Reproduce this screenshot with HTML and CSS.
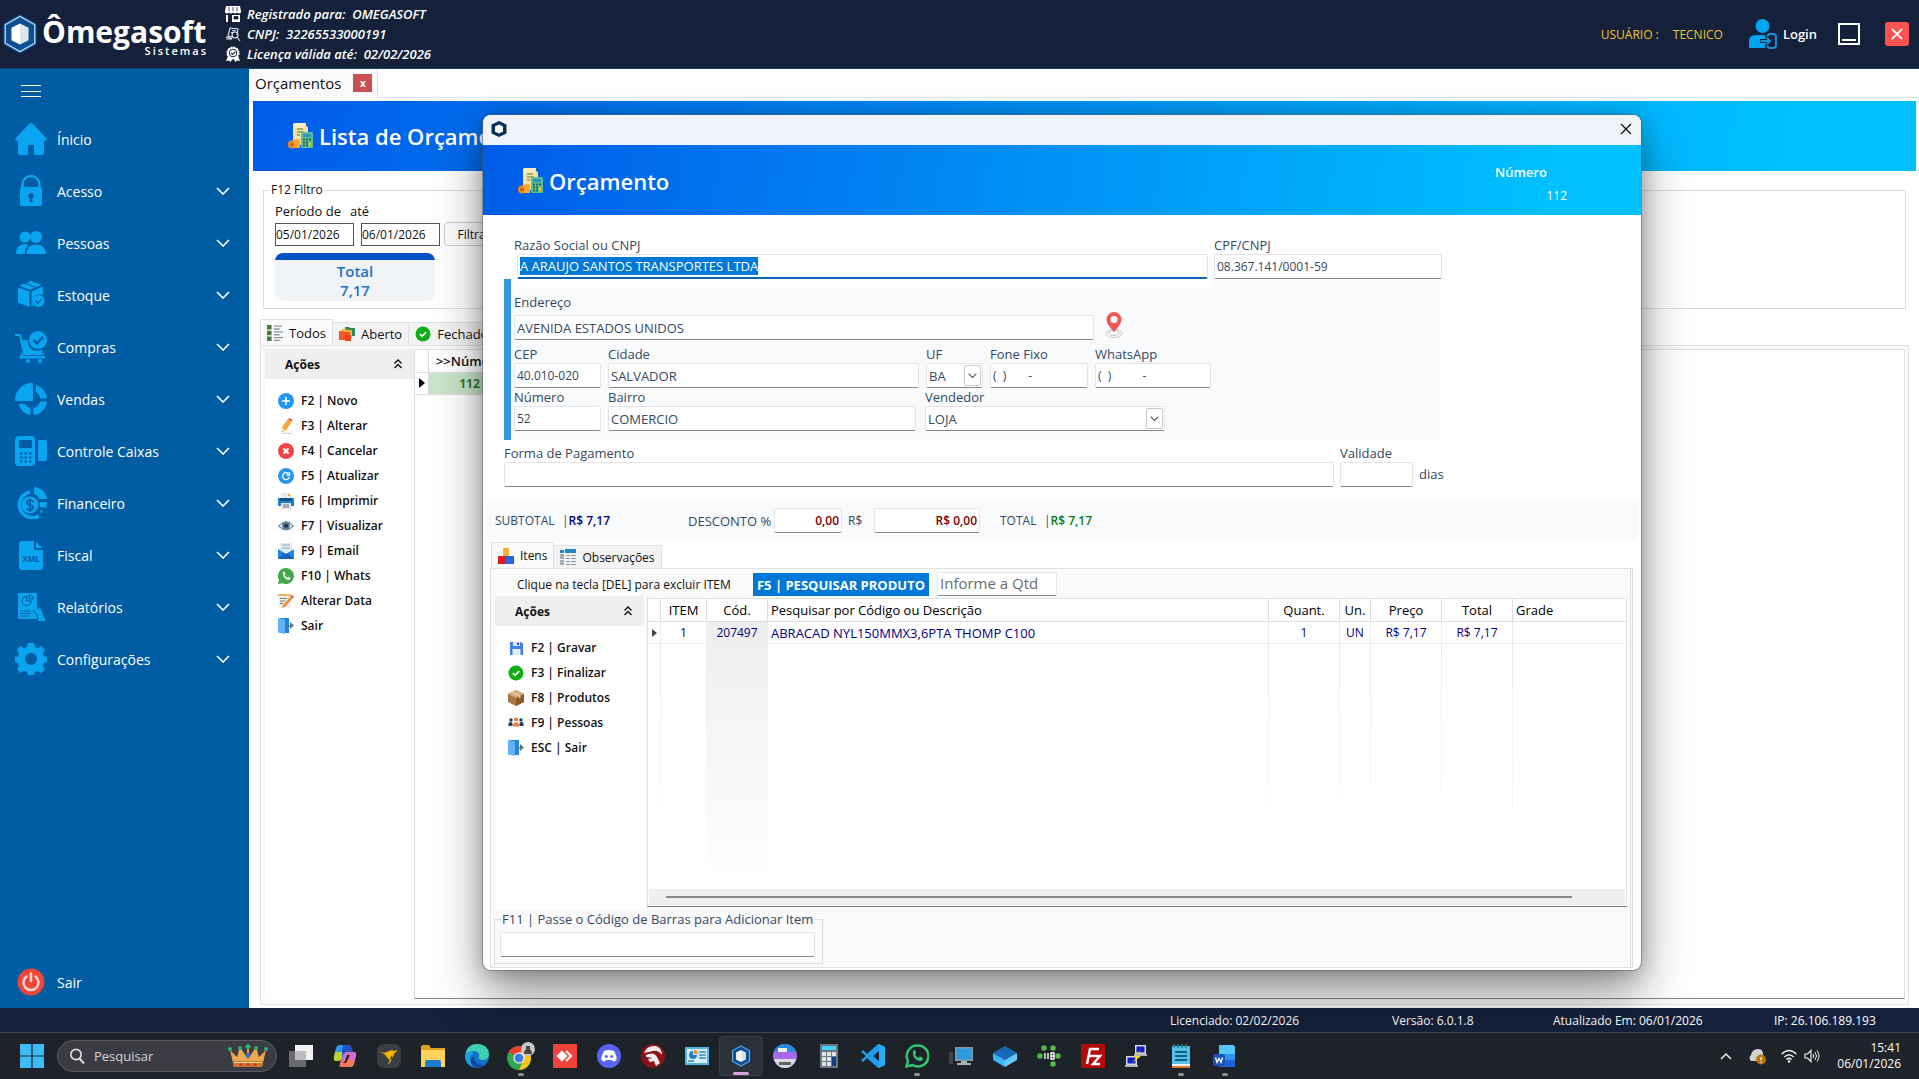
FILE: index.html
```html
<!DOCTYPE html>
<html lang="pt-BR">
<head>
<meta charset="utf-8">
<meta name="viewport" content="width=device-width, initial-scale=1">
<title>Ômegasoft Sistemas</title>
<link rel="stylesheet" href="styles.css">
</head>
<body>
<svg class="defs" aria-hidden="true">
  <symbol id="chev" viewBox="0 0 14 8"><path d="M1 1l6 6 6-6" fill="none" stroke="currentColor" stroke-width="1.6"/></symbol>
  <symbol id="collapse" viewBox="0 0 10 10"><path d="M1.500 4.500L5 1l3.500 3.500M1.500 9L5 5.500 8.500 9" fill="none" stroke="currentColor" stroke-width="1.400"/></symbol>
  <symbol id="hex" viewBox="0 0 40 44"><path d="M20 1l18 10v22L20 43 2 33V11z" fill="#0b3b73"/><path d="M20 3.500l15.500 8.700v19.600L20 40.500 4.500 31.800V12.200z" fill="#0c4f93" stroke="#a9d2f2" stroke-width="1.500"/><path d="M20 11l9 4.500v13L20 33z" fill="#dfe5ec"/><path d="M20 11l-9 4.500v13L20 33z" fill="#fff"/></symbol>
  <symbol id="budget" viewBox="0 0 26 26"><path d="M5 2q0-2 2-2h11v3q2 0 2 3v16H5z" fill="#f7dfa5"/><path d="M5 6V2q0-2 2-2h10l1 4z" fill="#fbe9c0"/><path d="M9 6h6M9 9h7M9 12h3" stroke="#7aa35b" stroke-width="1.300"/><rect x="13" y="9" width="12" height="16" rx="1.500" fill="#5fc08f"/><rect x="15" y="11" width="8" height="3" fill="#2d8fd0"/><path d="M15 16.500h2M18 16.500h2M21 16.500h2M15 19.500h2M18 19.500h2M15 22.500h2M18 22.500h2" stroke="#1c6e52" stroke-width="1.800"/><path d="M21 19h2v4.500h-2z" fill="#f0b429"/><circle cx="4" cy="21.500" r="4" fill="#f08a1d"/><path d="M6 17q3-2 6 0v8H6z" fill="#f7a62f"/><circle cx="4" cy="21.500" r="1.800" fill="#c9630f"/></symbol>
  <symbol id="check" viewBox="0 0 16 16"><circle cx="8" cy="8" r="7.500" fill="#0db014"/><path d="M4.800 8.200l2.300 2.200 4-4.300" fill="none" stroke="#fff" stroke-width="1.600"/></symbol>
  <symbol id="door" viewBox="0 0 16 16"><path d="M2 0h9v15H2z" fill="#1f86e0"/><path d="M0 0l7 1.500V16L0 14.500z" fill="#5fb2f7"/><path d="M8 7h4V4l4 3.500-4 3.500V8.500H8z" fill="#5b7685"/></symbol>
</svg>

<div class="app">
  <header class="topbar">
    <div class="logo">
      <svg class="logo-mark" aria-hidden="true"><use href="#hex"/></svg>
      <div class="logo-text"><span class="logo-name">Ômegasoft</span><span class="logo-sub">Sistemas</span></div>
    </div>
    <ul class="license">
      <li><svg viewBox="0 0 16 16"><path d="M1 0h14l1 5H0z" fill="#fff"/><path d="M0 5h16v1.500q-2 2-4 0-2 2-4 0-2 2-4 0-2 2-4 0zM1 9h2v7H1zM7 9h8v7H7z" fill="#fff"/><path d="M9 10.500h4v2.500H9zM4 1v4M8 1v4M12 1v4" stroke="#15213a" fill="#15213a" stroke-width=".8"/></svg>Registrado para:&nbsp; OMEGASOFT</li>
      <li><svg viewBox="0 0 16 16" fill="none" stroke="#e3e7ee" stroke-width="1.100"><path d="M5 2l8 1-1 6M5 2L3 10l4 1M1 11l6 1.500M1 13h6M7 4.500l4 .5M6 6.500h3"/><circle cx="10" cy="9" r="3"/><path d="M12 11l3 4"/></svg>CNPJ:&nbsp; 32265533000191</li>
      <li><svg viewBox="0 0 16 16"><path d="M3 10l-2 5 3-.5L5.500 16 8 12l2.500 4 1.500-1.500 3 .5-2-5z" fill="#fff"/><circle cx="8" cy="7" r="5.800" fill="#fff" stroke="#fff" stroke-width="1.600" stroke-dasharray="2 1"/><circle cx="8" cy="7" r="3.800" fill="none" stroke="#15213a"/><path d="M6 7l1.500 1.500L10.200 5.800" fill="none" stroke="#15213a" stroke-width="1.200"/></svg>Licença válida até:&nbsp; 02/02/2026</li>
    </ul>
    <div class="user">
      <span class="user-label">USUÁRIO :</span>
      <span class="user-name">TECNICO</span>
      <button class="login" type="button"><svg viewBox="0 0 28 30"><circle cx="13.500" cy="7" r="7" fill="#00a5f0"/><path d="M0 22q0-6 7-6h10v13H1q-1 0-1-1z" fill="#00a5f0"/><path d="M11 22h10m-3.500-3.500L21 22l-3.500 3.500M18 18v-1q0-2 2-2h4.500q2.500 0 2.500 2.500v9q0 2.500-2.500 2.500H20q-2 0-2-2v-1" fill="none" stroke="#15213a" stroke-width="4"/><path d="M11.500 22H21m-3-3l3 3-3 3M18.500 17.500q0-2.500 2.500-2.500h3q3 0 3 3v8q0 3-3 3h-3q-2.500 0-2.500-2.500" fill="none" stroke="#1c8fd6" stroke-width="2"/></svg>Login</button>
      <button class="win-min" type="button" aria-label="Minimizar"></button>
      <button class="win-close" type="button" aria-label="Fechar"><svg viewBox="0 0 12 12"><path d="M.8.800l10.400 10.400M11.200.800L.8 11.200" stroke="#fff" stroke-width="1.700"/></svg></button>
    </div>
  </header>

  <div class="workspace">
    <nav class="sidebar" aria-label="Menu">
      <button class="burger" type="button" aria-label="Menu"><span></span><span></span><span></span></button>
      <a class="nav" href="#"><svg viewBox="0 0 32 32"><path d="M16 0q1 0 2 1l14 15q0 1.500-1.500 1.500H29V30q0 2-2 2h-8V23q0-1-1-1h-4q-1 0-1 1v9H5q-2 0-2-2V17.500H1.500Q0 17.500 0 16L14 1q1-1 2-1z"/></svg><span>Ínicio</span></a>
      <a class="nav" href="#"><svg viewBox="0 0 32 32"><path d="M7.500 13V9.500a8.500 8.500 0 0 1 17 0V13" fill="none" stroke="#0aa5f0" stroke-width="2.400"/><rect x="5" y="12" width="22" height="19" rx="2"/><path d="M16 18a3 3 0 0 1 1.500 5.500V27h-3v-3.500A3 3 0 0 1 16 18z" fill="#005ca3"/></svg><span>Acesso</span><svg class="chev"><use href="#chev"/></svg></a>
      <a class="nav" href="#"><svg viewBox="0 0 32 32"><circle cx="10" cy="10" r="5.500"/><path d="M1 27q0-10 9-10 2 0 3.500.8Q9.500 21 10 27z"/><circle cx="21" cy="10" r="6"/><path d="M11.500 27q0-9.500 9.500-9.500T31 27z"/></svg><span>Pessoas</span><svg class="chev"><use href="#chev"/></svg></a>
      <a class="nav" href="#"><svg viewBox="0 0 32 32"><path d="M3 8.500l11.500 4V28L4 24q-1-.5-1-1.500zM4 6.500l5-2 11 4-4.500 2.500zM11 4l5-2 10.500 4-5 2zM16.500 12.500L28 7.500V16q-9-2-10.500 6 0 3 1 4.500l-2 1z"/><circle cx="23.500" cy="22" r="6"/><path d="M20.500 22l2.300 2.200 4-4.200" fill="none" stroke="#005ca3" stroke-width="1.600"/></svg><span>Estoque</span><svg class="chev"><use href="#chev"/></svg></a>
      <a class="nav" href="#"><svg viewBox="0 0 32 32"><path d="M0 4h5l4 19h20M6 28q-1.500-4 3-5" fill="none" stroke="#0aa5f0" stroke-width="2"/><path d="M7 9h6q-1 7 5 10 6 2 10-1l-1.500 4H9z"/><circle cx="23" cy="9" r="9"/><path d="M18.500 9l3.500 3.500 6-6.500" fill="none" stroke="#005ca3" stroke-width="2.500"/><path d="M6 25h24v2.500H6z"/><circle cx="13" cy="30" r="2"/><circle cx="25" cy="30" r="2"/></svg><span>Compras</span><svg class="chev"><use href="#chev"/></svg></a>
      <a class="nav" href="#"><svg viewBox="0 0 32 32"><path d="M18 0v18H0A17 17 0 0 1 18 0z"/><path d="M21 2a15 15 0 0 1 11 13.500h-7Q25 11 21 9zM32 18.500A15 15 0 0 1 18.500 32v-7q5-1 6.500-6.500zM3.500 21H10q1.500 3 5.500 4v7Q6.500 30.500 3.500 21z"/></svg><span>Vendas</span><svg class="chev"><use href="#chev"/></svg></a>
      <a class="nav" href="#"><svg viewBox="0 0 32 32"><path d="M4 1h12q4 0 4 4v22q0 4-4 4H4q-4 0-4-4V5q0-4 4-4zm0 4v8h13V5z" fill-rule="evenodd"/><path d="M23 5h7q2 0 2 2v17q0 2-2 2h-7z"/><path d="M5 18.500h2.500m2 0H12m2 0h2.500M5 22.500h2.500m2 0H12m2 0h2.500M5 26.500h2.500m2 0H12m2 0h2.500" stroke="#005ca3" stroke-width="2.200"/></svg><span>Controle Caixas</span><svg class="chev"><use href="#chev"/></svg></a>
      <a class="nav" href="#"><svg viewBox="0 0 32 32"><path d="M15 5A13 13 0 1 0 24 29" fill="none" stroke="#0aa5f0" stroke-width="3.600"/><circle cx="15" cy="18" r="8.500"/><path d="M19 0q11 1 13 12h-8q-1-4-5-5zM25 15h7l-1 6q-4-1-6-1zM25 23l3 1-2 3z"/><path d="M18 15q-.5-2-3-2t-3 2.300 3 2.700 3 2.700-3 2.300-3-2M15 11.500v13" fill="none" stroke="#005ca3" stroke-width="1.700"/></svg><span>Financeiro</span><svg class="chev"><use href="#chev"/></svg></a>
      <a class="nav" href="#"><svg viewBox="0 0 32 32"><path d="M7 2h12v7q0 2 2 2h7v17q0 3-3 3H7q-3 0-3-3V5q0-3 3-3z"/><path d="M21 3l6 6h-5q-1 0-1-1z"/><text x="16" y="22.500" text-anchor="middle" class="xml">XML</text></svg><span>Fiscal</span><svg class="chev"><use href="#chev"/></svg></a>
      <a class="nav" href="#"><svg viewBox="0 0 32 32"><path d="M3 2h19v14l2 3v-3q2 1 3 5l2 5v2H14H3z"/><path d="M23 27h7v3h-7z"/><path d="M11.500 5.500a4.500 4.500 0 1 0 4.500 4.500h-4.500zM14 4v4h4q-.5-4-4-4zM5 20h11M5 22.500h11M5 25h9M18 19l4 5 1 4" fill="none" stroke="#005ca3" stroke-width="1.100"/></svg><span>Relatórios</span><svg class="chev"><use href="#chev"/></svg></a>
      <a class="nav" href="#"><svg viewBox="0 0 32 32"><path d="M13 0h6l1 4 3 1.200L26.500 3l3.500 4-2 4 1.200 2.500H32v5.500l-3.200 1L28 23l2 3.500-4 3.500-3-2-3.500 1.300L19 32h-6l-1-3-3-1.300L5.500 30 2 26l2-3-1.200-3L0 19v-5.500h3L4 11 2 7l3.500-4L9 5.200 12 4zM16 10a6 6 0 1 0 .01 0z" fill-rule="evenodd"/></svg><span>Configurações</span><svg class="chev"><use href="#chev"/></svg></a>
      <a class="nav nav-exit" href="#"><svg viewBox="0 0 32 32"><circle cx="16" cy="16" r="13.500" fill="#ef4637"/><path d="M11.500 10.500a7.500 7.500 0 1 0 9 0M16 7.500V15" fill="none" stroke="#fbd5d2" stroke-width="2.500" stroke-linecap="round"/></svg><span>Sair</span></a>
    </nav>

    <main class="main">
      <div class="doc-tabs"><div class="doc-tab"><span>Orçamentos</span><button type="button" aria-label="Fechar aba">x</button></div></div>
      <div class="page">
        <h1 class="banner"><svg><use href="#budget"/></svg>Lista de Orçamentos</h1>
        <fieldset class="filter">
          <legend>F12 Filtro</legend>
          <div class="filter-labels"><label for="de">Período de</label><label for="ate">até</label></div>
          <div class="filter-row"><input id="de" type="text" value="05/01/2026"><input id="ate" type="text" value="06/01/2026"><button type="button">Filtrar</button></div>
          <div class="total-card"><span>Total</span><strong>7,17</strong></div>
        </fieldset>
        <div class="tabs list-tabs">
          <button class="tab active" type="button"><svg viewBox="0 0 14 14"><path d="M0 0h4v4H0zM0 5h4v4H0zM0 10h4v4H0z" fill="#4c7a3c"/><path d="M6 1h7M6 3.500h5M6 6h8M6 8.500h5M6 11h8M6 13.500h5" stroke="#8a94a0" stroke-width="1.200"/></svg>Todos</button>
          <button class="tab" type="button"><svg viewBox="0 0 16 14"><path d="M6 0h4l1 1h5v8H6z" fill="#2c8c5c"/><path d="M3 2h4l1 1h5v8H3z" fill="#f3b13c"/><path d="M0 4h4l1 1h6v8H0z" fill="#f4572e"/><path d="M6 8h6v6H6z" fill="#f0431c"/></svg>Aberto</button>
          <button class="tab" type="button"><svg><use href="#check"/></svg>Fechado</button>
        </div>
        <div class="list-panel">
          <aside class="actions">
            <h2>Ações<svg><use href="#collapse"/></svg></h2>
            <ul>
              <li><button type="button"><svg viewBox="0 0 16 16"><circle cx="8" cy="8" r="8" fill="#2196f3"/><path d="M8 4v8M4 8h8" stroke="#fff" stroke-width="1.500"/></svg>F2 | Novo</button></li>
              <li><button type="button"><svg viewBox="0 0 16 16"><path d="M4 9l6-8 4 2.500-6 9-4 1.500z" fill="#f6a93b"/><path d="M10 1l1.500-1L14.500 2 14 3.500z" fill="#d9534f"/><path d="M4 9l-1.500 5L7 12z" fill="#f5dfb5"/><path d="M4 15.300h10" stroke="#c9c9c9"/></svg>F3 | Alterar</button></li>
              <li><button type="button"><svg viewBox="0 0 16 16"><circle cx="8" cy="8" r="8" fill="#f0464a"/><path d="M5.500 5.500l5 5M10.500 5.500l-5 5" stroke="#fff" stroke-width="2"/></svg>F4 | Cancelar</button></li>
              <li><button type="button"><svg viewBox="0 0 16 16"><circle cx="8" cy="8" r="8" fill="#2b95f0"/><path d="M10.500 5.500a3.500 3.500 0 1 0 1 3.500M11.500 4v3h-3" fill="none" stroke="#fff" stroke-width="1.300"/></svg>F5 | Atualizar</button></li>
              <li><button type="button"><svg viewBox="0 0 16 16"><path d="M3 0h7l3 3v4H3z" fill="#e9eef2"/><path d="M10 0l3 3h-3z" fill="#f6a93b"/><path d="M0 5h16v8H0z" fill="#1f7fd1"/><path d="M2 5h12v3H2z" fill="#14518c"/><path d="M3 10h10v6H3z" fill="#dfe3e6"/><path d="M5 12h6M5 14h6" stroke="#777"/></svg>F6 | Imprimir</button></li>
              <li><button type="button"><svg viewBox="0 0 16 16"><path d="M.5 8Q8-.5 15.500 8 8 16 .5 8z" fill="#e4e9ec" stroke="#5a6872"/><circle cx="8" cy="7.800" r="4" fill="#5b84a3"/><circle cx="8" cy="7.800" r="2" fill="#1e2d38"/></svg>F7 | Visualizar</button></li>
              <li><button type="button"><svg viewBox="0 0 16 16"><path d="M2 0h12v11H2z" fill="#e3edf3"/><path d="M4 2h8M4 5h8" stroke="#94a5b0"/><path d="M0 6l8 5 8-5v10H0z" fill="#1e88e5"/><path d="M0 16l6-6 2 1 2-1 6 6z" fill="#1565c0"/></svg>F9 | Email</button></li>
              <li><button type="button"><svg viewBox="0 0 16 16"><path d="M8 0a8 8 0 1 1-3.500 15.200L0 16l1-4A8 8 0 0 1 8 0z" fill="#43a84a"/><path d="M5 4l1.500-.5 1 2.500-1 1q1 2 2.800 2.700l1-1 2.200 1.300q0 2-2 2Q4.500 10.500 5 4z" fill="#fff"/></svg>F10 | Whats</button></li>
              <li><button type="button"><svg viewBox="0 0 16 16"><path d="M0 1h13v14H1z" fill="#eceff1"/><path d="M0 1h13v2H0z" fill="#f2b26b"/><path d="M2 5.500h7M2 8h5M2 10.500h3" stroke="#777"/><path d="M5 12L13 3l2 2-8 9-3 .5z" fill="#f28a2e"/><path d="M13 3l1-1 2 2-1 1z" fill="#c2364f"/></svg>Alterar Data</button></li>
              <li><button type="button"><svg><use href="#door"/></svg>Sair</button></li>
            </ul>
          </aside>
          <div class="list-grid">
            <table class="list-table">
              <thead><tr><th class="ind"></th><th>&gt;&gt;Número</th></tr></thead>
              <tbody><tr><td class="ind"><i class="mark"></i></td><td>112</td></tr></tbody>
            </table>
          </div>
        </div>
      </div>
    </main>
  </div>

  <footer class="status"><span>Licenciado: 02/02/2026</span><span>Versão: 6.0.1.8</span><span>Atualizado Em: 06/01/2026</span><span>IP: 26.106.189.193</span></footer>

  <div class="taskbar">
    <button class="task start" type="button" aria-label="Iniciar"><svg viewBox="0 0 24 24"><path d="M0 0h11.400v11.400H0zM12.600 0H24v11.400H12.600zM0 12.600h11.400V24H0zM12.600 12.600H24V24H12.600z" fill="#3fbcf8"/></svg></button>
    <label class="search"><svg class="mag" viewBox="0 0 16 16"><circle cx="7" cy="6.500" r="5.200" fill="none" stroke="#ddd" stroke-width="1.700"/><path d="M10.500 10.500l4.500 5" stroke="#ddd" stroke-width="1.900"/></svg><input type="text" placeholder="Pesquisar" aria-label="Pesquisar"><svg class="crown" viewBox="0 0 40 24"><path d="M2 6l7 7 3-10 6 9 2-10 2 10 6-9 3 10 7-7-4 17H6z" fill="#e9a84e"/><path d="M5 17h30l-1 6H6z" fill="#c97a2e"/><path d="M6 18.500h28" stroke="#fbe0a0"/><g fill="#2fae74"><circle cx="2" cy="5" r="2"/><circle cx="38" cy="5" r="2"/><circle cx="12" cy="4" r="2"/><circle cx="28" cy="4" r="2"/><circle cx="20" cy="2.500" r="2.500"/></g><path d="M20 8l2.500 3.500L20 15l-2.500-3.500z" fill="#2c6cd6"/><g fill="#d1342f"><circle cx="13" cy="20.500" r="1.500"/><circle cx="20" cy="20.500" r="1.500"/><circle cx="27" cy="20.500" r="1.500"/></g></svg></label>
    <div class="apps">
      <button class="task" type="button" aria-label="Visão de tarefas"><svg viewBox="0 0 24 24"><path d="M0 7h17v16H0z" fill="#6a6a6e"/><path d="M6 1h18v15H6z" fill="#f2f2f2"/><path d="M6 7h11v9H6z" fill="#bdbdbf"/></svg></button>
      <button class="task" type="button" aria-label="Copilot"><svg viewBox="0 0 24 24"><path d="M7 1h9q2 0 1 3l-3 9q-1 3-4 3H3q-3 0-2-4l2-8q1-3 4-3z" fill="#2f9be8"/><path d="M2 8h9l-2 6q-1 3-4 3H3q-3 0-2-4z" fill="#b8d531"/><path d="M17 23H8q-2 0-1-3l3-9q1-3 4-3h7q3 0 2 4l-2 8q-1 3-4 3z" fill="#d86bd0"/><path d="M8 16h14l-1 4q-1 3-4 3H8q-2 0-1-3z" fill="#f6785a"/><path d="M10 1h6q2 0 3 4l1 3h-6q-3 0-4 3l-1 4V6z" fill="#2450c8"/><path d="M14 11l-2 6q-1 2-3 2h4l4-8z" fill="#1e222b"/></svg></button>
      <button class="task" type="button" aria-label="Kangaroo"><svg viewBox="0 0 24 24"><rect width="24" height="24" rx="7" fill="#3a3d42"/><path d="M2 7l5 2 4-1.500q4-2 6-.5l3-1-.5 2-2 1-1 3-1 2-.5-2.500-2 2.500 1.500 2.500-3 4-.5-.5 2-3.500-3.500-3.500-1-2z" fill="#f5b400"/></svg></button>
      <button class="task" type="button" aria-label="Explorador"><svg viewBox="0 0 24 24"><path d="M0 3q0-2 2-2h6l2 3h14v19H0z" fill="#e0a21b"/><path d="M0 6h24v17H0z" fill="#ffd35a"/><path d="M4 23v-5q0-2 2-2h12q2 0 2 2v5z" fill="#1a7bd0"/></svg></button>
      <button class="task" type="button" aria-label="Edge"><svg viewBox="0 0 24 24"><circle cx="12" cy="12" r="12" fill="#1273c6"/><path d="M1 8Q4 0 12 0q11 0 12 10 0 6-7 6-4 0-3-3 1-6-5-6Q4 7 1 10z" fill="#3fd0b0"/><path d="M9 8q-8 6 0 15Q0 21 0 12q1-5 9-4z" fill="#1c9ce6"/><path d="M9 13q0 9 12 8-8 6-14 0-4-5 2-8z" fill="#0d4a99"/></svg></button>
      <button class="task on" type="button" aria-label="Chrome"><svg viewBox="0 0 28 28" class="wide"><circle cx="12" cy="16" r="12" fill="#2fa84f"/><path d="M12 16L1.600 10A12 12 0 0 1 22.400 10H12z" fill="#e8402f"/><path d="M12 28a12 12 0 0 0 10.400-18H12l4 9z" fill="#fbc21a"/><circle cx="12" cy="16" r="5.600" fill="#fff"/><circle cx="12" cy="16" r="4.500" fill="#3b7de8"/><circle cx="21" cy="7" r="7" fill="#c7c9cb"/><path d="M17 12q0-5 4-5t4 5zM19 4h4v4h-4z" fill="#4a4444"/></svg></button>
      <button class="task" type="button" aria-label="AnyDesk"><svg viewBox="0 0 24 24"><path d="M0 0h24v24H0z" fill="#f0433a"/><path d="M9 6.500l5.500 5.500L9 17.500 3.500 12z" fill="#fff"/><path d="M13 7l5 5-5 5" fill="none" stroke="#fff" stroke-width="2"/></svg></button>
      <button class="task" type="button" aria-label="Discord"><svg viewBox="0 0 24 24"><circle cx="12" cy="12" r="12" fill="#5865f2"/><path d="M7 7q5-2 10 0 3 5 2.500 9-2 1.500-3.500 1.500l-1-1.500H9l-1 1.500q-1.500 0-3.500-1.500Q4 12 7 7z" fill="#fff"/><circle cx="9.300" cy="12.500" r="1.500" fill="#5865f2"/><circle cx="14.700" cy="12.500" r="1.500" fill="#5865f2"/></svg></button>
      <button class="task" type="button" aria-label="Spartan"><svg viewBox="0 0 24 24"><circle cx="12" cy="12" r="12" fill="#8c1218"/><path d="M3 9q3-8 12-7 6 2 6 9-4-5-9-4-4 1-9 2zM5 11q8-4 11 2l3 6-4 3-2-5-4 1-2-3 5-1-7-1z" fill="#eee"/></svg></button>
      <button class="task" type="button" aria-label="Painel"><svg viewBox="0 0 24 24"><path d="M0 3h24v18H0z" fill="#4db6ea"/><path d="M2 5h20v14H2z" fill="#d7f0fc"/><path d="M8 7a4 4 0 1 0 4 4H8z" fill="#1f7fc9"/><path d="M9 6v4h4q0-4-4-4z" fill="#f0902a"/><path d="M14 8h7M14 11h7M14 14h7M3 17h6" stroke="#3a87b8" stroke-width="1.500"/></svg></button>
      <button class="task current" type="button" aria-label="Ômegasoft"><svg viewBox="0 0 40 44"><use href="#hex"/></svg></button>
      <button class="task" type="button" aria-label="Backup"><svg viewBox="0 0 24 24"><circle cx="12" cy="12" r="12" fill="#a86be8"/><path d="M1 8Q4 0 12 0t11 8z" fill="#2b8ae0"/><path d="M5 4h9v4H5z" fill="#eee"/><path d="M1 15h22q-3 9-11 9T1 15z" fill="#d9dde2"/><path d="M6 18h12v3H6z" fill="#666"/></svg></button>
      <button class="task" type="button" aria-label="Calculadora"><svg viewBox="0 0 24 24"><path d="M3 0h18v24H3z" fill="#6a7885"/><path d="M5 2h14v4H5z" fill="#45d3f5"/><path d="M5 8h4v4H5zM10 8h4v4h-4zM15 8h4v4h-4zM5 13h4v4H5zM10 13h4v4h-4zM5 18h4v4H5zM10 18h4v4h-4z" fill="#dfe4e8"/><path d="M15 13h4v9h-4z" fill="#123f80"/></svg></button>
      <button class="task" type="button" aria-label="VS Code"><svg viewBox="0 0 24 24"><path d="M17 0l7 3v18l-7 3L6 14l-4 4-2-2 5-4-5-4 2-2 4 4zm1 7l-6 5 6 5z" fill="#1f9cf0" fill-rule="evenodd"/><path d="M18 0l6 3v18l-6 3z" fill="#2aa9f5"/></svg></button>
      <button class="task on" type="button" aria-label="WhatsApp"><svg viewBox="0 0 24 24"><path d="M12.500 1.500a10.500 10.500 0 1 1-5 19.500L1.500 22.500 3 17A10.500 10.500 0 0 1 12.500 1.500z" fill="none" stroke="#2ecc71" stroke-width="2.400"/><path d="M8 6.500l2-.5 1.300 3-1.300 1.500q1 2.500 3.500 3.500l1.500-1.500 3 1.500q0 3-3 3Q7 15.500 8 6.500z" fill="#2ecc71"/></svg></button>
      <button class="task" type="button" aria-label="Computador"><svg viewBox="0 0 24 24"><path d="M6 3h18v14H6z" fill="#8a979f"/><path d="M7.500 4.500h15v11h-15z" fill="#2c9ade"/><path d="M8 19h14v2H8zM12 17h6v2h-6z" fill="#aab3b9"/><path d="M0 8h4v12H0z" fill="#3c4449"/></svg></button>
      <button class="task" type="button" aria-label="Sandbox"><svg viewBox="0 0 24 24"><path d="M12 2l12 7-12 7L0 9z" fill="#1769b8"/><path d="M0 9l12 7v7L0 16z" fill="#3fb3f5"/><path d="M24 9l-12 7v7l12-7z" fill="#63c9fa"/></svg></button>
      <button class="task" type="button" aria-label="IIS"><svg viewBox="0 0 24 24"><g fill="#55b848"><circle cx="7" cy="4" r="2.800"/><circle cx="16" cy="4" r="2.800"/><circle cx="3" cy="12" r="2.800"/><circle cx="21" cy="12" r="2.800"/><circle cx="16" cy="20" r="2.800"/></g><path d="M8 9v6M11 9v6M14 9h3v6h-3zM14 12h3" fill="none" stroke="#fff" stroke-width="1.400"/></svg></button>
      <button class="task" type="button" aria-label="FileZilla"><svg viewBox="0 0 24 24"><path d="M0 0h24v24H0z" fill="#b30a0a"/><path d="M6 20L9 5h9M8 12h6M12 12h7l-7 8h7" fill="none" stroke="#fff" stroke-width="2.400"/></svg></button>
      <button class="task" type="button" aria-label="PuTTY"><svg viewBox="0 0 24 24"><path d="M10 1h11v9H10z" fill="#d8d8d8"/><path d="M11.500 2.500h8v6h-8z" fill="#1020c8"/><path d="M1 12h11v9H1z" fill="#d8d8d8"/><path d="M2.500 13.500h8v6h-8z" fill="#1020c8"/><path d="M16 6l-8 7h4l-5 6 9-7h-4z" fill="#f7e400"/><path d="M0 21h13v2H0zM9 10h13v2H9z" fill="#b5b5b5"/></svg></button>
      <button class="task on" type="button" aria-label="Bloco de notas"><svg viewBox="0 0 24 24"><path d="M3 2h18v20H3z" fill="#52c3e6"/><path d="M3 22h18v2H3z" fill="#d97a2b"/><path d="M3 20h18v2H3z" fill="#eef4f6"/><path d="M6 8h12M6 12h12M6 16h12" stroke="#135a80" stroke-width="1.800"/><path d="M5 0v4M9 0v4M13 0v4M17 0v4" stroke="#27809f" stroke-width="1.600"/></svg></button>
      <button class="task on" type="button" aria-label="Word"><svg viewBox="0 0 24 24"><path d="M6 1h13q3 0 3 3v19H6z" fill="#1f62d8"/><path d="M6 1h13q3 0 3 3v6H6z" fill="#55c8f7"/><path d="M6 10h16v6H6z" fill="#2f94ee"/><rect y="10" width="12" height="12" rx="2" fill="#1a4fb8"/><path d="M2.500 13.500L4 18.500l2-4 2 4 1.500-5" fill="none" stroke="#fff" stroke-width="1.300"/></svg></button>
    </div>
    <div class="tray">
      <svg class="t-up" viewBox="0 0 12 8"><path d="M1 7l5-5 5 5" fill="none" stroke="#eee" stroke-width="1.500"/></svg>
      <svg class="t-cloud" viewBox="0 0 18 18"><path d="M2 14q-3-3 0-6 1-6 7-6 5 0 5 5v7z" fill="#d0d2d4"/><circle cx="12" cy="12.500" r="5" fill="#b5740e"/><path d="M12 10v3.200M12 14.500v1.200" stroke="#fff" stroke-width="1.300"/></svg>
      <svg class="t-wifi" viewBox="0 0 16 14"><path d="M.8 5Q8-2 15.200 5M3.300 8Q8 3.500 12.700 8M5.500 10.500q2.500-2.300 5 0" fill="none" stroke="#eee" stroke-width="1.500"/><circle cx="8" cy="12.500" r="1.300" fill="#eee"/></svg>
      <svg class="t-vol" viewBox="0 0 16 14"><path d="M1 5h2.500L7 1.500v11L3.500 9H1z" fill="none" stroke="#eee" stroke-width="1.200"/><path d="M9 5q1.500 2 0 4M11 3q3 4 0 8M13 1.500q4 5.500 0 11" fill="none" stroke="#eee"/></svg>
      <div class="clock"><span>15:41</span><span>06/01/2026</span></div>
    </div>
  </div>

  <section class="dialog" role="dialog" aria-label="Orçamento">
    <div class="dlg-title"><svg class="dlg-mark" viewBox="0 0 16 16"><path d="M8 0l7.500 3.500v9L8 16 .5 12.500v-9z" fill="#0a2f5c"/><path d="M8 3.500l4 2v5l-4 2-4-2v-5z" fill="#fff"/></svg><button type="button" aria-label="Fechar janela"><svg viewBox="0 0 12 12"><path d="M1 1l10 10M11 1L1 11" stroke="#111" stroke-width="1.300"/></svg></button></div>
    <div class="dlg-banner"><h2><svg><use href="#budget"/></svg>Orçamento</h2><div class="doc-no"><span>Número</span><strong>112</strong></div></div>

    <form class="form">
      <div class="row row-top">
        <div class="field grow razao"><label for="razao">Razão Social ou CNPJ</label><input id="razao" type="text" value="A ARAUJO SANTOS TRANSPORTES LTDA" autofocus></div>
        <div class="field w-cnpj"><label for="cnpj">CPF/CNPJ</label><input id="cnpj" class="digits" type="text" value="08.367.141/0001-59"></div>
      </div>
      <div class="address">
        <div class="row row-end"><div class="field spaced grow"><label for="end">Endereço</label><input id="end" type="text" value="AVENIDA ESTADOS UNIDOS"></div><button class="pin" type="button" aria-label="Mapa"><svg viewBox="0 0 18 26"><ellipse cx="9" cy="21.500" rx="8" ry="4" fill="none" stroke="#c4c8cc"/><ellipse cx="9" cy="21" rx="5" ry="2.500" fill="none" stroke="#c4c8cc"/><path d="M9 0a7.500 7.500 0 0 1 7.500 7.500Q16.500 12 9 20 1.500 12 1.500 7.500A7.500 7.500 0 0 1 9 0z" fill="#f25555"/><circle cx="9" cy="7.500" r="3.600" fill="#fff"/></svg></button></div>
        <div class="row row-mid">
          <div class="field w-short"><label for="cep">CEP</label><input id="cep" class="digits" type="text" value="40.010-020"></div>
          <div class="field grow"><label for="cid">Cidade</label><input id="cid" type="text" value="SALVADOR"></div>
          <div class="field w-uf"><label for="uf">UF</label><span class="select"><select id="uf"><option>BA</option></select><svg><use href="#chev"/></svg></span></div>
          <div class="field w-fone"><label for="fone">Fone Fixo</label><input id="fone" class="digits" type="text" value="(&nbsp;&nbsp;)&nbsp;&nbsp;&nbsp;&nbsp;&nbsp;&nbsp;&nbsp;-"></div>
          <div class="field w-whats"><label for="whats">WhatsApp</label><input id="whats" class="digits" type="text" value="(&nbsp;&nbsp;)&nbsp;&nbsp;&nbsp;&nbsp;&nbsp;&nbsp;&nbsp;&nbsp;&nbsp;&nbsp;-"></div>
        </div>
        <div class="row row-low">
          <div class="field w-short"><label for="num">Número</label><input id="num" class="digits" type="text" value="52"></div>
          <div class="field grow"><label for="bai">Bairro</label><input id="bai" type="text" value="COMERCIO"></div>
          <div class="field w-vend"><label for="vend">Vendedor</label><span class="select"><select id="vend"><option>LOJA</option></select><svg><use href="#chev"/></svg></span></div>
        </div>
      </div>
      <div class="row row-pay">
        <div class="field grow"><label for="pag">Forma de Pagamento</label><input id="pag" type="text"></div>
        <div class="field w-val"><label for="val">Validade</label><input id="val" type="text"></div>
        <span class="days">dias</span>
      </div>
    </form>

    <div class="totals">
      <span class="t-sub">SUBTOTAL</span><b class="blue"><i>|</i>R$ 7,17</b>
      <label class="t-desc" for="dp">DESCONTO %</label><input id="dp" class="w-dp" type="text" value="0,00">
      <label class="t-rs" for="dv">R$</label><input id="dv" class="w-dv" type="text" value="R$ 0,00">
      <span class="t-tot">TOTAL</span><b class="green"><i>|</i>R$ 7,17</b>
    </div>

    <div class="tabs dlg-tabs">
      <button class="tab active" type="button"><svg viewBox="0 0 16 16"><path d="M5 0h6v8H5z" fill="#f9a01b"/><path d="M0 8h8v8H0z" fill="#e01a22"/><path d="M8 8h8v8H8z" fill="#2468e8"/><path d="M5 0l3 2 3-2v7H5z" fill="#f6b63c"/></svg>Itens</button>
      <button class="tab" type="button"><svg viewBox="0 0 16 16"><path d="M0 1h4v3H0zM5 0h11v4H5z" fill="#1e88c9"/><path d="M0 5h4v5H0zM0 11h4v5H0z" fill="#9fb0bc"/><path d="M6 6.500h4M11 6.500h5M6 9.500h4M11 9.500h5M6 12.500h4M11 12.500h5M6 15.500h4M11 15.500h5" stroke="#8898a5"/></svg>Observações</button>
    </div>
    <div class="items-panel">
      <div class="items-bar"><span>Clique na tecla [DEL] para excluir ITEM</span><button type="button">F5 | PESQUISAR PRODUTO</button><input type="text" placeholder="Informe a Qtd" aria-label="Informe a Qtd"></div>
      <div class="items-body">
        <aside class="actions">
          <h2>Ações<svg><use href="#collapse"/></svg></h2>
          <ul>
            <li><button type="button"><svg viewBox="0 0 16 16"><path d="M2 2h11l2 2v11H2z" fill="#3f7ef0"/><path d="M5 2h7v4H5z" fill="#dfe9fb"/><path d="M9 2.500h2V5H9z" fill="#2455b5"/><path d="M4.500 9h8v6h-8z" fill="#e8eefb"/></svg>F2 | Gravar</button></li>
            <li><button type="button"><svg><use href="#check"/></svg>F3 | Finalizar</button></li>
            <li><button type="button"><svg viewBox="0 0 16 16"><path d="M8 0l8 4v8l-8 4-8-4V4z" fill="#a9773f"/><path d="M8 0l8 4-8 4-8-4z" fill="#d6ad79"/><path d="M8 8l8-4v8l-8 4z" fill="#8a5d2e"/><path d="M3 2.500l8 4v2l1.500-.8V5.800L5 1.500z" fill="#e6cba4"/></svg>F8 | Produtos</button></li>
            <li><button type="button"><svg viewBox="0 0 16 16"><g fill="#1f3d66"><circle cx="3" cy="5" r="1.700"/><circle cx="13" cy="5" r="1.700"/><path d="M.5 11V8q2.500-2 4 0v3zM11.500 11V8q2-2 4 0v3z"/></g><circle cx="8" cy="4.500" r="2" fill="#ee7d31"/><path d="M5 11.500V9Q8 5.500 11 9v2.500z" fill="#ee7d31"/></svg>F9 | Pessoas</button></li>
            <li><button type="button"><svg><use href="#door"/></svg>ESC | Sair</button></li>
          </ul>
        </aside>
        <div class="items-grid">
          <table class="items-table">
            <colgroup><col class="c-ind"><col class="c-item"><col class="c-cod"><col><col class="c-71"><col class="c-un"><col class="c-71"><col class="c-71"><col class="c-grade"></colgroup>
            <thead><tr><th></th><th>ITEM</th><th>Cód.</th><th class="l">Pesquisar por Código ou Descrição</th><th>Quant.</th><th>Un.</th><th>Preço</th><th>Total</th><th class="l">Grade</th></tr></thead>
            <tbody>
              <tr><td><i class="mark small"></i></td><td>1</td><td class="cod">207497</td><td class="l desc">ABRACAD NYL150MMX3,6PTA THOMP C100</td><td>1</td><td>UN</td><td>R$ 7,17</td><td>R$ 7,17</td><td></td></tr>
              <tr class="rest"><td></td><td></td><td class="cod"></td><td></td><td></td><td></td><td></td><td></td><td></td></tr>
            </tbody>
          </table>
          <div class="hscroll"><span></span></div>
        </div>
      </div>
      <fieldset class="barcode"><legend><label for="bar">F11 | Passe o Código de Barras para Adicionar Item</label></legend><input id="bar" type="text"></fieldset>
    </div>
  </section>
</div>
<script src="app.js"></script>
</body>
</html>
```
FILE: styles.css
```css
* { box-sizing: border-box; }
body { margin: 0; font-family: "Open Sans", "Noto Sans", sans-serif; font-size: 12px; color: #111; }
button, input, select { font: inherit; color: inherit; }
button { border: 0; padding: 0; background: none; }
ul { list-style: none; margin: 0; padding: 0; }
h1, h2 { margin: 0; }
a { text-decoration: none; color: inherit; }
svg { flex: none; }
.defs { display: none; }

.app { position: relative; min-height: 100vh; display: flex; flex-direction: column; }

/* top bar */
.topbar { height: 69px; flex: none; display: flex; align-items: center; background: #15213a; border-bottom: 1px solid #0f4375; color: #fff; }
.logo { width: 222px; display: flex; align-items: center; }
.logo-mark { width: 38px; height: 42px; margin-left: 1px; }
.logo-text { display: flex; flex-direction: column; margin-left: 3px; width: 166px; padding-top: 7px; }
.logo-name { font-size: 30px; line-height: 26px; font-weight: 700; }
.logo-sub { font-size: 11px; line-height: 12px; font-weight: 600; text-align: right; letter-spacing: 2px; }
.license { display: flex; flex-direction: column; font-style: italic; font-weight: 600; font-size: 13px; }
.license li { display: flex; align-items: center; gap: 6px; height: 20px; white-space: nowrap; }
.license svg { width: 16px; height: 16px; margin-left: 3px; }
.user { margin-left: auto; margin-right: 10px; display: flex; align-items: center; }
.user-label, .user-name { color: #f2c52c; }
.user-label { margin-right: 14px; }
.user-name { margin-right: 26px; }
.login { display: flex; align-items: center; gap: 6px; font-size: 13px; font-weight: 600; margin-right: 21px; }
.login svg { width: 28px; height: 30px; }
.win-min { width: 22px; height: 22px; border: 2px solid #fff; padding: 0 2px 2px; display: flex; align-items: flex-end; margin-right: 25px; }
.win-min::after { content: ""; height: 2px; width: 100%; background: #fff; }
.win-close { width: 24px; height: 24px; border-radius: 3px; background: #fb5151; display: grid; place-items: center; }
.win-close svg { width: 12px; height: 12px; }

/* sidebar */
.workspace { flex: 1; display: flex; min-height: 0; }
.sidebar { width: 249px; flex: none; background: #005ca3; color: #fff; display: flex; flex-direction: column; }
.burger { width: 20px; height: 12px; margin: 16px 0 16px 21px; display: flex; flex-direction: column; justify-content: space-between; }
.burger span { height: 1px; background: #fff; width: 100%; }
.nav { height: 52px; display: flex; align-items: center; gap: 10px; padding: 0 19px 0 15px; font-size: 14px; }
.nav > svg { width: 32px; height: 32px; fill: #0aa5f0; }
.nav > .chev { width: 14px; height: 8px; margin-left: auto; color: #fff; fill: none; }
.nav-exit { margin-top: auto; }
.xml { font: 700 8px "Open Sans", sans-serif; fill: #005ca3; }

/* main window */
.main { flex: 1; min-width: 0; display: flex; flex-direction: column; background: #fff; }
.doc-tabs { height: 29px; display: flex; border-bottom: 1px solid #e3e3e3; }
.doc-tab { display: flex; align-items: center; gap: 12px; height: 29px; padding: 0 5px 2px 6px; background: #fafafa; border-right: 1px solid #ddd; font-size: 15px; }
.doc-tab button { width: 19px; height: 18px; background: #c75050; color: #fff; font-size: 10px; line-height: 16px; font-weight: 700; }
.page { flex: 1; display: flex; flex-direction: column; padding: 3px 3px 0 4px; }
.banner, .dlg-banner { height: 70px; flex: none; background: linear-gradient(100deg, #005ce8, #00c0ff 92%); color: #fff; }
.banner { display: flex; align-items: center; gap: 5px; padding-left: 35px; font-size: 22px; font-weight: 600; }
.banner svg, .dlg-banner svg { width: 26px; height: 26px; }
fieldset { margin: 0; min-width: 0; border: 1px solid #dcdcdc; padding: 0; }
.filter { margin: 9px 10px 0; height: 129px; padding: 0 11px; }
.filter legend { margin-left: -5px; padding: 0 1px; line-height: 20px; }
.filter-labels { display: flex; gap: 9px; line-height: 18px; margin-top: 2px; font-size: 13px; }
.filter-row { display: flex; gap: 7px; margin-top: 2px; align-items: center; }
.filter-row input { width: 79px; height: 23px; border: 1px solid #555; padding: 0; background: #fff; }
.filter-row button { width: 60px; height: 24px; border: 1px solid #ccc; border-radius: 4px; background: #fdfdfd; margin-left: -3px; }
.total-card { width: 160px; height: 48px; margin-top: 7px; border-radius: 8px; background: #f1f4f7; background-image: linear-gradient(#0050c8 7px, transparent 7px); padding-top: 9px; display: flex; flex-direction: column; align-items: center; color: #1a73c8; font-size: 15px; line-height: 19px; font-weight: 600; }
.total-card strong { font-weight: 600; }
.tabs { display: flex; align-items: flex-end; }
.tab { display: flex; align-items: center; gap: 6px; height: 23px; padding: 0 6px; border: 1px solid #e0e0e0; border-left: 0; border-bottom: 0; background: #f3f3f3; white-space: nowrap; }
.tab.active { height: 26px; background: #fafafa; border-left: 1px solid #e0e0e0; }
.tab svg { width: 16px; height: 16px; }
.list-tabs { margin: 10px 7px 0; height: 26px; }
.list-tabs .tab { font-size: 13px; }
.list-panel { flex: 1; margin: 0 7px 3px; border: 1px solid #e0e0e0; background: #fafafa; padding: 3px 3px 5px 4px; display: flex; }
.actions { width: 149px; flex: none; background: #fff; }
.actions h2 { height: 30px; background: #efefef; font-size: 12px; font-weight: 700; display: flex; align-items: center; justify-content: space-between; padding: 0 11px 0 20px; }
.actions h2 svg { width: 10px; height: 10px; }
.actions ul { padding-top: 9px; }
.actions li { height: 25px; display: flex; }
.actions button { display: flex; align-items: center; gap: 7px; padding-left: 13px; font-size: 12px; font-weight: 600; white-space: nowrap; }
.actions svg { width: 16px; height: 16px; }
.list-grid { flex: 1; background: #fff; border: 1px solid #e0e0e0; border-bottom-color: #868686; }
table { border-collapse: collapse; table-layout: fixed; }
.list-table { width: 96px; }
.list-table th { height: 22px; line-height: 20px; font-size: 13px; padding: 0; font-weight: 600; border-right: 1px solid #ddd; border-bottom: 1px solid #ddd; }
.list-table td { height: 22px; padding: 0; text-align: center; color: #2e7d32; font-weight: 700; background: #c8e6c9; border-bottom: 1px solid #ddd; }
.list-table .ind { width: 13px; background: #fff; border-right: 1px solid #ddd; }
.mark { display: block; width: 0; height: 0; margin-left: 4px; border: 5px solid transparent; border-left: 6px solid #000; border-right: 0; }
.mark.small { border-width: 4px 0 4px 5px; border-left-color: #444; margin-left: 4px; }

/* status bar and task bar */
.status { height: 24px; flex: none; background: #15213a; color: #fff; display: grid; grid-template-columns: 1fr 222px 161px 221px 145px; align-items: center; }
.status span:first-child { grid-column: 2; }
.taskbar { height: 47px; flex: none; background: #1e2229; border-top: 1px solid #43464d; display: flex; align-items: center; }
.task { width: 44px; height: 40px; display: grid; place-items: center; position: relative; border-radius: 4px; flex: none; }
.task svg { width: 24px; height: 24px; }
.task svg.wide { width: 28px; height: 28px; }
.start { margin: 0 3px 0 10px; }
.search { width: 220px; height: 32px; border-radius: 16px; border: 1px solid #5b5d63; background: #3b3c43; display: flex; align-items: center; padding: 0 8px 0 11px; }
.mag { width: 16px; height: 16px; }
.search input { flex: 1; min-width: 0; border: 0; background: none; outline: 0; padding: 0 0 0 9px; font-size: 13px; }
.search input::placeholder { color: #d5d5d5; opacity: 1; }
.crown { width: 40px; height: 24px; }
.apps { display: flex; margin-left: 2px; }
.task.current { background: #2c3138; border: 1px solid #3c4148; }
.task.on::after, .task.current::after { content: ""; position: absolute; bottom: 0; left: 19px; width: 6px; height: 3px; border-radius: 2px; background: #8d9196; }
.task.current::after { left: 13px; width: 16px; background: #d5a3e0; }
.tray { margin-left: auto; margin-right: 18px; display: flex; align-items: center; color: #fff; }
.t-up { width: 12px; height: 8px; margin-right: 17px; }
.t-cloud { width: 18px; height: 18px; margin-right: 14px; }
.t-wifi { width: 16px; height: 14px; margin-right: 7px; }
.t-vol { width: 16px; height: 14px; margin-right: 17px; }
.clock { display: flex; flex-direction: column; align-items: flex-end; line-height: 16px; }

/* quote window */
.dialog { position: absolute; top: 115px; right: 278px; bottom: 109px; left: 483px; background: #fff; border-radius: 8px; overflow: hidden; display: flex; flex-direction: column; box-shadow: 0 0 0 1px rgba(90,90,90,.5), 0 2px 20px rgba(0,0,0,.25), 0 26px 50px rgba(0,0,0,.4); color: #34495e; }
.dlg-title { height: 30px; flex: none; background: #eef3f9; display: flex; align-items: center; justify-content: space-between; padding: 0 9px 2px 8px; }
.dlg-mark { width: 16px; height: 16px; }
.dlg-title button { width: 12px; height: 12px; display: flex; }
.dlg-banner { display: flex; justify-content: space-between; padding: 0 74px 0 35px; }
.dlg-banner h2 { display: flex; align-items: center; gap: 5px; font-size: 22px; font-weight: 600; padding-top: 2px; }
.doc-no { width: 72px; display: flex; flex-direction: column; padding-top: 16px; line-height: 23px; font-weight: 600; }
.doc-no span { font-size: 13px; }
.doc-no strong { text-align: right; font-weight: 500; }
.form { padding: 21px 199px 0 21px; font-size: 13px; }
.row { display: flex; align-items: flex-end; }
.field { display: flex; flex-direction: column; }
.field label { line-height: 18px; white-space: nowrap; font-weight: 500; }
.field.spaced label { margin-bottom: 4px; }
.grow { flex: 1; min-width: 0; }
.dialog input, .dialog select { width: 100%; height: 25px; border: 1px solid #e4e4e4; border-bottom-color: #868686; border-radius: 2px; background: #fff; padding: 0 2px; outline: 0; }
.dialog .digits { font-size: 12px; }
.dialog select { appearance: none; }
.row-top { padding-left: 10px; gap: 6px; }
.dialog .razao input { border-bottom: 2px solid #0a63b5; width: auto; margin-left: 3px; }
.razao input::selection { background: #0078d7; color: #fff; }
.w-cnpj { width: 228px; }
.w-short { width: 87px; }
.w-uf { width: 57px; }
.w-fone { width: 98px; }
.w-whats { width: 116px; }
.w-vend { width: 240px; }
.w-val { width: 73px; }
.address { border-left: 7px solid #3498db; background: linear-gradient(#fff, #fff) 0 0 / calc(100% - 229px) 8px no-repeat #f8fafc; padding: 14px 0 9px 3px; margin-right: 2px; }
.row-end { margin-right: 346px; margin-bottom: 5px; }
.pin { width: 18px; height: 26px; margin: 0 -29px 2px 11px; }
.pin svg { width: 18px; height: 26px; display: block; }
.row-mid { gap: 7px; margin-right: 229px; }
.row-low { gap: 7px; margin-right: 275px; }
.row-low .w-vend { margin-left: 2px; }
.row-pay { gap: 6px; margin-top: 4px; }
.days { line-height: 18px; font-weight: 500; padding-bottom: 4px; width: 23px; white-space: nowrap; }
.select { position: relative; display: block; }
.select select { display: block; }
.select svg { position: absolute; right: 2px; top: 2px; width: 17px; height: 21px; border: 1px solid #c8c8c8; border-radius: 2px; padding: 0 3px; background: #fff; color: #555; pointer-events: none; }
.totals { height: 41px; flex: none; margin: 13px 3px 0; padding-left: 9px; background: #f8fafc; display: flex; align-items: center; font-weight: 500; white-space: nowrap; }
.totals b { font-weight: 600; }
.totals b i { font-style: normal; font-weight: 400; color: #34495e; }
.totals .blue { color: #000080; width: 126px; }
.totals .green { color: #0a7a12; }
.totals input { text-align: right; color: #800000; font-weight: 600; }
.t-sub { width: 67px; }
.t-desc { width: 86px; font-size: 13px; }
.totals .w-dp { width: 68px; }
.t-rs { width: 32px; padding-left: 6px; }
.totals .w-dv { width: 106px; }
.t-tot { width: 64px; padding-left: 20px; }
.dlg-tabs { margin: 2px 8px 0; height: 25px; color: #111; }
.items-panel { flex: 1; min-height: 0; margin: 0 8px 2px 7px; border: 1px solid #e0e0e0; border-right: 3px double #ddd; background: #fafafa; display: flex; flex-direction: column; color: #111; padding: 3px 3px 3px 4px; }
.items-bar { display: flex; align-items: flex-start; height: 24px; padding-left: 22px; }
.items-bar span { width: 236px; white-space: nowrap; line-height: 26px; }
.items-bar button { width: 176px; height: 23px; margin-top: 1px; background: #0078d7; color: #fff; font-size: 13px; font-weight: 700; white-space: nowrap; }
.dialog .items-bar input { width: 120px; height: 24px; margin-left: 8px; padding-bottom: 3px; font-size: 15px; }
.items-bar input::placeholder { color: #6b6b6b; opacity: 1; }
.items-body { flex: 1; min-height: 0; display: flex; gap: 3px; }
.items-grid { flex: 1; min-width: 0; background: #fff; border: 1px solid #e0e0e0; border-bottom-color: #777; margin: 2px 0 3px; display: flex; flex-direction: column; }
.items-table { width: 100%; flex: 1; height: 290px; border-collapse: separate; border-spacing: 0; }
.c-ind { width: 13px; } .c-item { width: 46px; } .c-cod { width: 61px; } .c-71 { width: 71px; } .c-un { width: 31px; } .c-grade { width: 113px; }
.items-table th { height: 23px; padding: 0; font-size: 13px; font-weight: 500; color: #000; border-bottom: 1px solid #ddd; border-right: 1px solid #ddd; white-space: nowrap; }
.items-table td { height: 22px; padding: 0; text-align: center; color: #000080; border-bottom: 1px solid #eee; border-right: 1px solid #eee; white-space: nowrap; }
.items-table th:last-child, .items-table td:last-child { border-right: 0; }
.items-table .l { text-align: left; padding-left: 3px; }
.items-table .desc { font-size: 13px; line-height: 16px; }
.items-table .cod { background: #efefef; }
.items-table .rest td { height: auto; border: 0; background: linear-gradient(#ececec, #fff) right 0 / 1px 88% no-repeat; }
.items-table .rest td.cod { background: linear-gradient(#efefef, #fff); }
.items-table .rest td:last-child { background: none; }
.hscroll { height: 16px; flex: none; background: #efefef; margin: 0 1px 1px; padding: 7px 53px 0 17px; }
.hscroll span { display: block; height: 2px; background: #868686; }
.barcode { width: 329px; height: 54px; margin-left: -1px; padding: 4px 7px 0 5px; color: #34495e; }
.barcode legend { margin-left: 1px; padding: 0 1px; line-height: 18px; font-size: 13px; white-space: nowrap; }
```
FILE: app.js
```js
// The customer name opens focused with its text selected.
const razao = document.getElementById("razao");
razao.focus();
razao.select();
```
